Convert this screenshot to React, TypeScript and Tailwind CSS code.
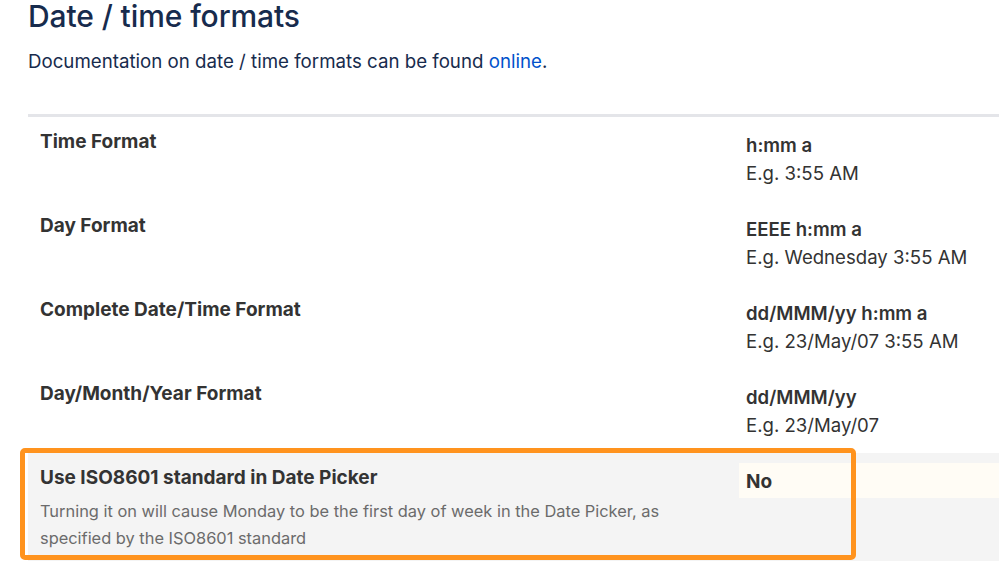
const rows = [
  { label: 'Time Format', value: 'h:mm a', example: 'E.g. 3:55 AM' },
  { label: 'Day Format', value: 'EEEE h:mm a', example: 'E.g. Wednesday 3:55 AM' },
  { label: 'Complete Date/Time Format', value: 'dd/MMM/yy h:mm a', example: 'E.g. 23/May/07 3:55 AM' },
  { label: 'Day/Month/Year Format', value: 'dd/MMM/yy', example: 'E.g. 23/May/07' },
]

export default function App() {
  return (
    <div
      className="relative h-[561px] w-[999px] overflow-hidden bg-white pl-[28px]"
      style={{ fontFamily: 'Inter, "Noto Sans", sans-serif' }}
    >
      <h1 className="-mt-[2px] text-[30px] font-medium leading-[36px] tracking-[-0.1px] text-[#172b4d]">
        Date / time formats
      </h1>
      <p className="mt-[15px] text-[18.7px] leading-[26px] text-[#172b4d]">
        Documentation on date / time formats can be found{' '}
        <a href="#" className="text-[#0052cc]">online</a>.
      </p>

      <div className="mt-[39px] border-t-[3px] border-[#e4e5e9]">
        {rows.map((r) => (
          <div key={r.label} className="grid h-[84px] grid-cols-[711px_1fr] text-[#333333]">
            <div className="pl-[12px] pt-[11px] text-[19px] font-bold leading-[28px]">{r.label}</div>
            <div className="pl-[7px] pt-[14px] text-[18.6px] leading-[28px]">
              <div className="font-semibold">{r.value}</div>
              <div>{r.example}</div>
            </div>
          </div>
        ))}

        {/* ISO row */}
        <div className="grid h-[120px] grid-cols-[711px_1fr] bg-[#f4f4f4] text-[#333333]">
          <div className="pl-[12px] pt-[11px]">
            <div className="text-[19px] font-bold leading-[28px]">Use ISO8601 standard in Date Picker</div>
            <div className="mt-[6px] w-[660px] text-[16.4px] leading-[27px] text-[#6b6b6b]">
              Turning it on will cause Monday to be the first day of week in the Date Picker, as specified by the
              ISO8601 standard
            </div>
          </div>
          <div className="pt-[10px]">
            <div className="h-[35px] bg-[#fffcf5] pl-[7px] pt-[5px] text-[19px] font-bold leading-[28px]">No</div>
          </div>
        </div>
      </div>

      {/* annotation highlight */}
      <div className="pointer-events-none absolute left-[20px] top-[448px] h-[112px] w-[836px] rounded-[5px] border-[5px] border-[#ff931e]" />
    </div>
  )
}
